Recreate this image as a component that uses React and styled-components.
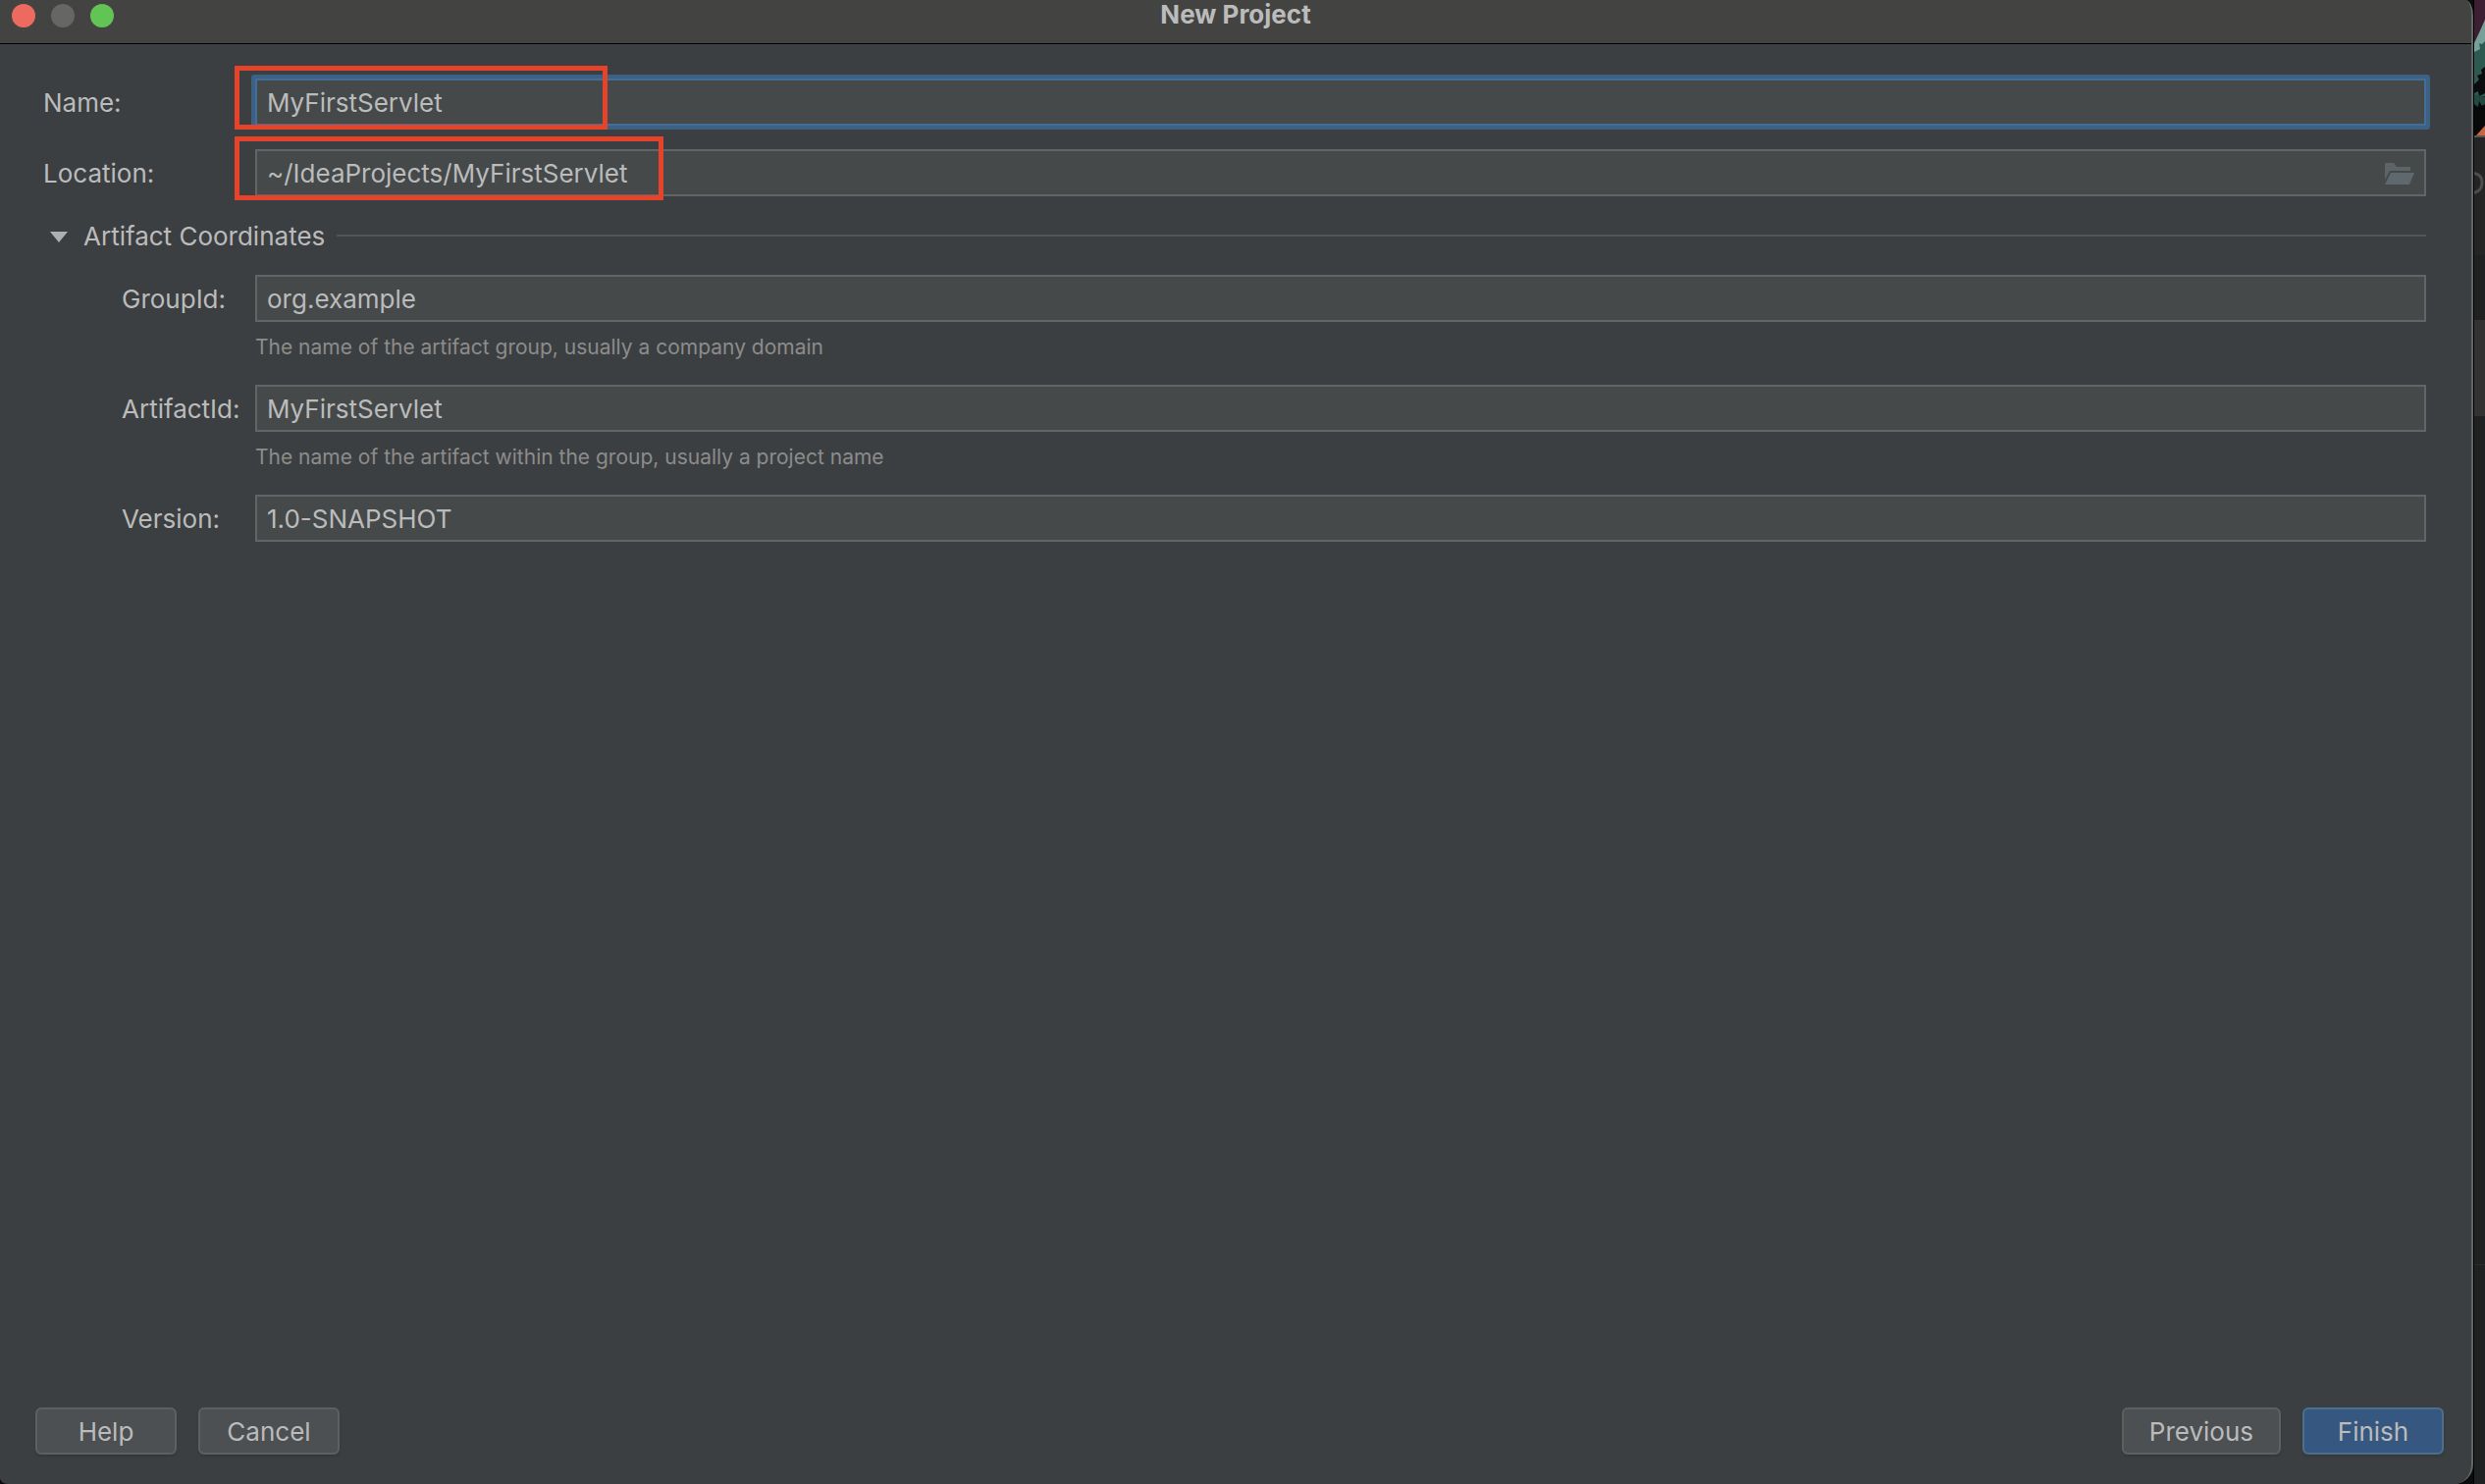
import React from "react";
import styled, { createGlobalStyle, css } from "styled-components";

const GlobalStyle = createGlobalStyle`
  *, *::before, *::after { box-sizing: border-box; }
  body {
    margin: 0;
    background: #1f2021;
    color: #bbbbbb;
    font-family: Inter, "Liberation Sans", sans-serif;
    font-size: 26px;
    line-height: 32px;
  }
  button, input { font: inherit; color: inherit; }
`;

const Desktop = styled.div`
  display: grid;
  grid-template-columns: minmax(0, 1fr) 12px;
  min-height: 100vh;
  background: #0c0c0d;
`;

const Dialog = styled.main`
  display: flex;
  flex-direction: column;
  background: #3c3f41;
  border-right: 2px solid #636667;
  border-radius: 0 8px 20px 8px / 0 16px 20px 6px;
  overflow: hidden;
`;

const TitleBar = styled.header`
  position: relative;
  display: flex;
  height: 45px;
  padding: 4px 12px;
  background: #434442;
  border-bottom: 1px solid #000000;
`;

const Lights = styled.div`
  position: relative;
  display: flex;
  gap: 16px;
`;

const Light = styled.button`
  width: 24px;
  height: 24px;
  padding: 0;
  border: 0;
  border-radius: 50%;
  background: ${(p) => p.$color};
`;

const Title = styled.h1`
  position: absolute;
  inset: 0;
  margin: 0;
  font-size: 26px;
  line-height: 30px;
  font-weight: 700;
  text-align: center;
`;

const Form = styled.form`
  flex: 1;
  display: flex;
  flex-direction: column;
  padding: 35px 28px 30px 36px;
`;

const Fields = styled.div`
  display: grid;
  grid-template-columns: 216px minmax(0, 1fr);
  align-items: center;
  row-gap: 24px;
  padding: 0 18px 0 8px;
`;

const Label = styled.label`
  padding-top: 2px;
  padding-left: ${(p) => (p.$nested ? 80 : 0)}px;
  white-space: nowrap;
`;

const Field = styled.div`
  position: relative;
  display: flex;
`;

const Input = styled.input`
  flex: 1;
  min-width: 0;
  height: 48px;
  padding: 0 10px;
  border: 2px solid #646464;
  border-radius: 0;
  outline: none;
  background: #45494a;
  ${(p) =>
    p.$active &&
    css`
      border-color: #466d94;
      box-shadow: 0 0 0 4px #3d6185;
      border-radius: 1px;
    `}
`;

const Browse = styled.button`
  position: absolute;
  right: 12px;
  top: 13px;
  width: 32px;
  height: 24px;
  padding: 0;
  border: 0;
  background: none;
  svg { display: block; }
`;

const Mark = styled.span`
  position: absolute;
  top: -13px;
  left: -21px;
  bottom: -4px;
  width: ${(p) => p.$width}px;
  border: 5px solid #e5432a;
  pointer-events: none;
`;

const SectionHead = styled.div`
  grid-column: 1 / -1;
  display: flex;
  align-items: center;
  gap: 12px;
  height: 32px;
`;

const Toggle = styled.button`
  display: flex;
  align-items: center;
  gap: 16px;
  padding: 2px 0 0 7px;
  border: 0;
  background: none;
  svg { display: block; }
`;

const Rule = styled.span`
  flex: 1;
  height: 2px;
  background: #515556;
`;

const Hint = styled.p`
  grid-column: 2;
  margin: -12px 0 0;
  color: #8c8c8c;
  font-size: 21px;
  line-height: 28px;
`;

const Footer = styled.footer`
  display: flex;
  gap: 22px;
  margin-top: auto;
`;

const Spacer = styled.span`
  flex: 1;
`;

const Button = styled.button`
  min-width: 144px;
  height: 48px;
  padding: 2px 26px 0;
  border: 2px solid ${(p) => (p.$primary ? "#4c708c" : "#5e6060")};
  border-radius: 6px;
  background: ${(p) => (p.$primary ? "#365880" : "#4c5052")};
  box-shadow: 0 2px 2px #35383a;
`;

const Backdrop = styled.aside`
  display: flex;
  flex-direction: column;
  background: #1f2021;
  border-left: 1px solid #000000;
  overflow: hidden;
  svg { display: block; flex: none; }
`;

const Pane = styled.div`
  flex: ${(p) => (p.$height ? `0 0 ${p.$height}px` : "1")};
  background: ${(p) => p.$color};
  border-top: ${(p) => (p.$line ? "1px solid #2a2b2c" : "0")};
`;

function TextField({ id, label, value, nested, active, markWidth, children }) {
  return (
    <>
      <Label htmlFor={id} $nested={nested}>{label}</Label>
      <Field>
        <Input id={id} defaultValue={value} $active={active} spellCheck={false} />
        {children}
        {markWidth && <Mark $width={markWidth} />}
      </Field>
    </>
  );
}

function Wallpaper() {
  return (
    <svg width="11" height="200" viewBox="0 0 11 200" aria-hidden="true">
      <path d="M0 0h11v138H0z" fill="#3c1f33" />
      <path d="M11 20L7 29 0 44v40h11z" fill="#78a09b" />
      <path d="M11 42L8 45 5 44 6 50 0 53v45h11z" fill="#2c5950" />
      <path d="M11 68L7 71 8 75 3 77 5 81 0 86v9l4-2 1 5 6-3z" fill="#0b0c0d" />
      <path d="M0 96l11 3v39H0z" fill="#214b41" />
      <path d="M0 106l4 3 1-6 3 5 3-2v32H0z" fill="#070808" />
      <path d="M11 128L2 138h9z" fill="#c8663f" />
      <path d="M0 138h11v62H0z" fill="#242424" />
      <path d="M0 138h11v2H0z" fill="#5a5552" />
      <path d="M0 176.500Q8 178 8 186Q8 194 0 196.500" fill="none" stroke="#4d4d4d" strokeWidth="3" />
    </svg>
  );
}

export default function App() {
  return (
    <>
      <GlobalStyle />
      <Desktop>
        <Dialog>
          <TitleBar>
            <Title>New Project</Title>
            <Lights>
              <Light type="button" aria-label="Close" $color="#ec6a5e" />
              <Light type="button" aria-label="Minimize" $color="#656665" />
              <Light type="button" aria-label="Zoom" $color="#61c454" />
            </Lights>
          </TitleBar>
          <Form onSubmit={(e) => e.preventDefault()}>
            <Fields>
              <TextField id="name" label="Name:" value="MyFirstServlet" active markWidth={380} />
              <TextField id="location" label="Location:" value="~/IdeaProjects/MyFirstServlet" markWidth={437}>
                <Browse type="button" aria-label="Browse">
                  <svg width="32" height="24" viewBox="0 0 32 24">
                    <path d="M2 1h9l3 4h14v4H7L2 18z" fill="#5c6467" />
                    <path d="M8 11h24l-5 12H2z" fill="#5f686d" />
                  </svg>
                </Browse>
              </TextField>
              <SectionHead>
                <Toggle type="button" aria-expanded="true">
                  <svg width="18" height="11" viewBox="0 0 18 11">
                    <path d="M0 0h18L9 11z" fill="#adb0b2" />
                  </svg>
                  Artifact Coordinates
                </Toggle>
                <Rule />
              </SectionHead>
              <TextField id="group" label="GroupId:" value="org.example" nested />
              <Hint>The name of the artifact group, usually a company domain</Hint>
              <TextField id="artifact" label="ArtifactId:" value="MyFirstServlet" nested />
              <Hint>The name of the artifact within the group, usually a project name</Hint>
              <TextField id="version" label="Version:" value="1.0-SNAPSHOT" nested />
            </Fields>
            <Footer>
              <Button type="button">Help</Button>
              <Button type="button">Cancel</Button>
              <Spacer />
              <Button type="button">Previous</Button>
              <Button type="submit" $primary>Finish</Button>
            </Footer>
          </Form>
        </Dialog>
        <Backdrop>
          <Wallpaper />
          <Pane $height={60} $color="#242424" />
          <Pane $height={66} $color="#1f2021" />
          <Pane $height={98} $color="#323232" />
          <Pane $height={864} $color="#1f2021" />
          <Pane $color="#1f2021" $line />
        </Backdrop>
      </Desktop>
    </>
  );
}
